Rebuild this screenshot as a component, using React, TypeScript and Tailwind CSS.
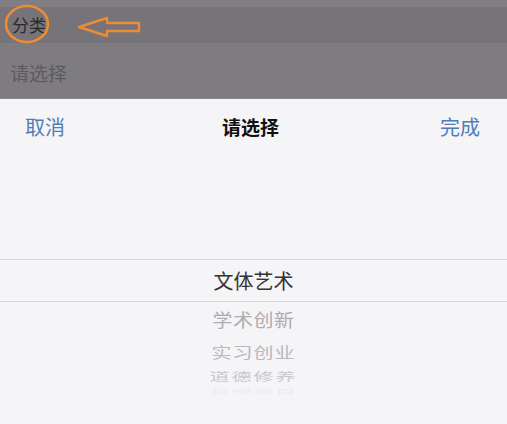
export default function App() {
  const font = { fontFamily: '"Noto Sans CJK SC", "Noto Sans", sans-serif' };
  return (
    <div className="relative w-[507px] h-[424px] overflow-hidden bg-[#f5f4f7]" style={font}>
      {/* dimmed page behind the sheet */}
      <div className="flex flex-col bg-[#7e7c81]">
        <div className="h-[7px] bg-[#807e83]" />
        <div className="h-[36px] bg-[#767479] flex items-center pl-[12px] text-[17px] text-[#2a292c]">
          分类
        </div>
        <div className="h-[56px] flex items-center pl-[10px] pt-[6px] text-[19px] text-[#5c5a5f] border-b border-[#89878c]">
          请选择
        </div>
      </div>

      {/* annotation */}
      <svg className="absolute left-0 top-0" width="160" height="50" viewBox="0 0 160 50">
        <ellipse cx="27" cy="24" rx="21" ry="18" fill="none" stroke="#ee8c35" strokeWidth="2.6" />
        <polygon
          points="79,27 107,18 107,23 139,23 139,31 107,31 107,36"
          fill="none"
          stroke="#ee8c35"
          strokeWidth="2.4"
          strokeLinejoin="round"
        />
      </svg>

      {/* sheet */}
      <div className="flex flex-col">
        <div className="h-[56px] flex items-center justify-between pl-[25px] pr-[27px] text-[20px]">
          <span className="text-[#4f7db5]">取消</span>
          <span className="font-bold text-[#111] text-[19px] -ml-[4px]">请选择</span>
          <span className="text-[#4f7db5]">完成</span>
        </div>
        <div className="h-[104px]" />
        <div className="h-[43px] border-y border-[#d6d5da] flex items-center justify-center text-[20px] text-[#333]">
          文体艺术
        </div>
        <div className="flex flex-col items-center text-[#aeadb1]">
          <div className="h-[35px] flex items-center text-[20px] scale-y-[0.9] tracking-[0.5px]">学术创新</div>
          <div className="h-[30px] flex items-center text-[20px] scale-y-[0.75] text-[#b9b8bc] tracking-[1px]">实习创业</div>
          <div className="h-[20px] flex items-center text-[20px] scale-y-[0.55] text-[#c8c7cb] tracking-[2px]">道德修养</div>
          <div className="h-[8px] flex items-center text-[20px] scale-y-[0.25] text-[#ecebef] tracking-[2px]">其他项目</div>
        </div>
      </div>
    </div>
  );
}
